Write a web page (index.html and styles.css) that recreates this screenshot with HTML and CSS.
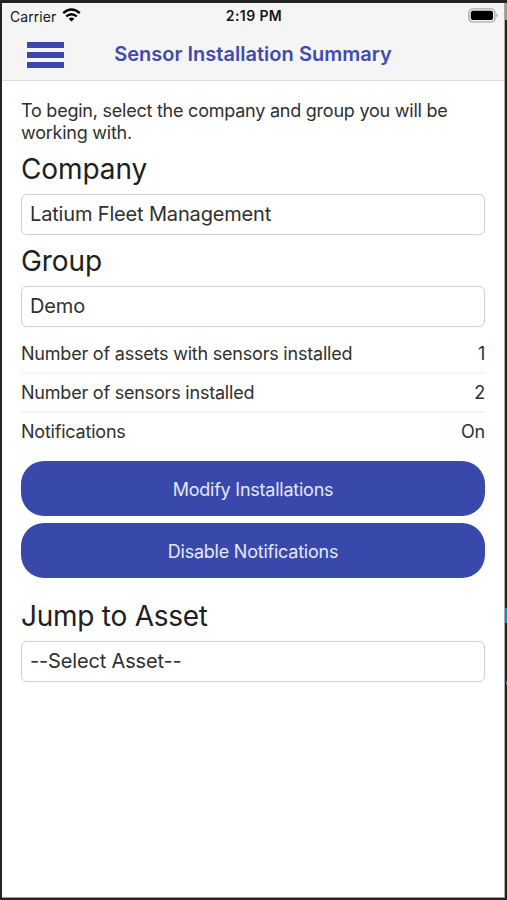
FILE: index.html
```html
<!DOCTYPE html>
<html lang="en">
<head>
<meta charset="utf-8">
<title>Sensor Installation Summary</title>
<link rel="stylesheet" href="styles.css">
</head>
<body>
<div class="device">
  <header class="header">
    <div class="status">
      <div class="carrier"><span>Carrier</span>
        <svg class="wifi" width="19" height="14" viewBox="0 0 19 14" fill="none" stroke="#000" stroke-width="2.4"><path d="M1.2 5.2Q9.5-2 17.8 5.2"/><path d="M4.2 8.4Q9.5 3.9 14.8 8.4"/><path d="M6.6 10.7Q9.5 8.2 12.4 10.7L9.5 13.5Z" fill="#000" stroke="none"/></svg>
      </div>
      <time class="clock">2:19 PM</time>
      <svg class="battery" width="30" height="15" viewBox="0 0 30 15"><rect x=".9" y=".9" width="26" height="13" rx="4" fill="#f5f5f5" stroke="#aaa" stroke-width="1.4"/><rect x="2.8" y="2.8" width="22.2" height="9.2" rx="2" fill="#000"/><path d="M28.4 5.2Q30.6 7.4 28.4 9.6Z" fill="#999"/></svg>
    </div>
    <div class="bar">
      <button class="menu" aria-label="Menu"><i></i><i></i><i></i></button>
      <h1 class="title">Sensor Installation Summary</h1>
    </div>
  </header>
  <main class="content">
    <p class="intro">To begin, select the company and group you will be<br>working with.</p>
    <h2>Company</h2>
    <div class="field">Latium Fleet Management</div>
    <h2>Group</h2>
    <div class="field">Demo</div>
    <dl class="stats">
      <div class="row"><dt>Number of assets with sensors installed</dt><dd>1</dd></div>
      <div class="row"><dt>Number of sensors installed</dt><dd>2</dd></div>
      <div class="row"><dt>Notifications</dt><dd>On</dd></div>
    </dl>
    <div class="actions">
      <button class="btn">Modify Installations</button>
      <button class="btn">Disable Notifications</button>
    </div>
    <h2 class="jump">Jump to Asset</h2>
    <div class="field">--Select Asset--</div>
  </main>
</div>
<i class="edge edge-yellow"></i><i class="edge edge-blue"></i><i class="edge edge-dot"></i>
</body>
</html>
```
FILE: styles.css
```css
* { box-sizing: border-box; margin: 0; padding: 0; }
body { width: 507px; height: 900px; padding: 3px 2px 2px; overflow: hidden; position: relative; background: #242424; color: #303030; font-family: Inter, "Liberation Sans", sans-serif; }
button { border: 0; background: none; font: inherit; color: inherit; }
.device { height: 895px; background: #fff; border-bottom: 1px solid #999; border-right: 1px solid #aaa; }
.header { height: 78px; background: #f5f5f5; border-bottom: 1px solid #dadada; }
.status { height: 26px; padding: 0 6px 0 8px; display: grid; grid-template-columns: 1fr auto 1fr; align-items: center; font-size: 14px; color: #161616; }
.carrier { display: flex; align-items: center; gap: 6px; letter-spacing: .05px; }
.wifi { margin-top: -2px; }
.clock { margin-top: -2px; font-weight: 600; letter-spacing: .4px; }
.battery { justify-self: end; margin-top: -1px; }
.bar { height: 50px; display: grid; grid-template-columns: 38px 1fr 38px; padding: 0 24px; align-items: center; }
.menu { display: flex; flex-direction: column; gap: 4px; margin: 1px 0 0 1px; }
.menu i { height: 6px; background: #3949ab; }
.title { font-size: 20px; font-weight: 600; line-height: 24px; letter-spacing: .02px; text-align: center; color: #3f4bae; white-space: nowrap; }
.content { padding: 19px 19px 0; }
.intro { height: 43px; font-size: 18px; line-height: 21.5px; letter-spacing: -.235px; white-space: nowrap; }
h2 { height: 51px; padding-top: 9px; font-size: 28px; line-height: 34px; font-weight: 400; letter-spacing: -.1px; color: #202020; }
.field { height: 41px; padding: 0 8px 1px; display: flex; align-items: center; border: 1px solid #d2d2d2; border-radius: 6px; margin-bottom: 1px; font-size: 20px; line-height: 24px; letter-spacing: -.16px; box-shadow: 0 0 1px #ddd; }
.field + h2 { height: 50px; padding-top: 8px; }
.stats { padding-top: 7px; font-size: 18px; letter-spacing: -.21px; }
.row { height: 39px; display: flex; align-items: center; justify-content: space-between; border-bottom: 2px solid #f5f5f5; }
.row:last-child { height: 38px; padding-bottom: 2px; border: 0; }
.actions { padding-top: 10px; display: grid; gap: 7px; }
.btn { height: 55px; border-radius: 23px; background: #3949ab; color: #e4e7fa; font-size: 18px; letter-spacing: -.23px; padding-top: 1px; }
.jump { height: 63px; padding-top: 21px; letter-spacing: -.25px; }
.edge { position: absolute; right: 0; width: 2px; background: #1688c8; }
.edge-yellow { top: 3px; height: 17px; background: #a6a06b; }
.edge-blue { top: 608px; height: 15px; }
.edge-dot { top: 681px; height: 4px; width: 1px; background: #668; }
```
